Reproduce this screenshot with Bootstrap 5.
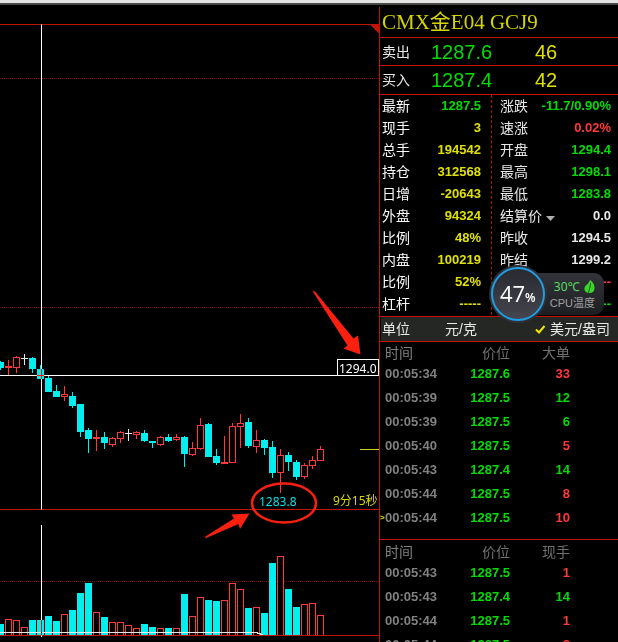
<!DOCTYPE html>
<html lang="zh-CN">
<head>
<meta charset="utf-8">
<meta name="viewport" content="width=device-width, initial-scale=1">
<title>CMX金E04 GCJ9</title>
<link href="https://cdn.jsdelivr.net/npm/bootstrap@5.3.0/dist/css/bootstrap.min.css" rel="stylesheet">
<style>
  :root {
    --up: #ff3838;
    --down: #00dc00;
    --gold: #e0e000;
    --line: #c01408;
  }
  body {
    background: #000;
    color: #e8e8e8;
    font: 14px/22px "Liberation Sans", "Noto Sans CJK SC", sans-serif;
  }
  .titlebar { height: 5px; background: #e4e4e4; border-bottom: 2px solid #484848; }
  .chart-pane { min-width: 0; }
  .chart-pane svg { height: auto; }
  .quote-pane { flex: 0 0 239px; border-left: 1px solid var(--line); margin-top: 2px; }
  .rule { border-bottom: 1px solid var(--line); }
  .c-up { color: var(--up); }
  .c-down { color: var(--down); }
  .c-gold { color: var(--gold); }

  .symbol { font: 21px/30px "Liberation Serif", "Noto Sans CJK SC", serif; color: #d4d400; padding-left: 2px; }
  .level { height: 28px; padding-left: 2px; }
  .level + .level { height: 29px; }
  .level .side { width: 49px; }
  .level .price, .level .lots { font-size: 20px; }
  .level .price { width: 104px; }

  .stats { grid-template-columns: 111fr 127fr; padding-bottom: 1px; }
  .stats dl + dl { border-left: 1px dashed #b01818; }
  .stats dl > div { height: 22px; padding: 0 10px 0 2px; }
  .stats dl + dl > div { padding: 0 7px 0 8px; }
  .stats dt { font-weight: 400; }
  .stats dd { font: 700 13px/22px "Liberation Sans", sans-serif; }
  .pick { background: none; color: inherit; line-height: 22px; }

  .units { height: 24px; background: #242723; margin-left: 1px; padding: 0 8px 0 1px; }
  .units .metric { margin-left: 35px; }

  .ticks { table-layout: fixed; font: 700 13px/24px "Liberation Sans", sans-serif; }
  .ticks th { height: 20px; font: 400 14px/20px "Noto Sans CJK SC", sans-serif; color: #707070; padding: 0; }
  .ticks td { height: 24px; padding: 0; }
  .ticks .t { width: 70px; padding-left: 5px; color: #808080; }
  .ticks .n { width: 60px; text-align: right; }
  .big-orders { padding-bottom: 9px; margin-bottom: 1px; }
  .cursor { left: 0; color: var(--gold); font-size: 8px; }

  .gadget { top: 170px; right: 14px; font-family: "Noto Sans", "Noto Sans CJK SC", sans-serif; }
  .dial { width: 58px; height: 58px; background: rgba(48, 49, 56, .95); z-index: 1; }
  .dial-face { width: 54px; height: 54px; border: 2px solid #1f9ee8; background: linear-gradient(#292a30, #44454e); color: #fff; }
  .dial-face b { font: 400 22px/48px "Open Sans", sans-serif; }
  .dial-face small { font-size: 12px; font-weight: 600; }
  .temp { background: linear-gradient(#33343a, #1d1e22); border-radius: 10px; margin-left: -29px; padding: 5px 9px 3px 32px; font-size: 12px; line-height: 17px; color: #a0a0a0; }
  .temp .name { font-family: "Liberation Sans", "Noto Sans CJK SC", sans-serif; font-size: 11px; }
  .temp .deg { color: #58dc60; }
</style>
<script src="https://cdn.jsdelivr.net/npm/bootstrap@5.3.0/dist/js/bootstrap.bundle.min.js"></script>
</head>
<body class="vh-100 overflow-hidden">
<div class="titlebar"></div>
<main class="d-flex">
  <section class="chart-pane flex-grow-1" aria-label="K线图">
    <svg class="d-block w-100" viewBox="0 5 379 637" shape-rendering="crispEdges" font-family="Noto Sans, Noto Sans CJK SC, sans-serif">
      <rect y="5" width="379" height="637" fill="#000"/>
      <g fill="#c01408">
        <rect y="24" width="379" height="1"/>
        <path d="M369 24h10v10z"/>
        <rect y="509" width="379" height="1"/>
      </g>
      <path d="M0 78.500H379M0 307.500H379M0 581.500H379" stroke="#800c0c" stroke-dasharray="1 1"/>
      <g id="candles"></g>
      <g id="volumes"></g>
      <rect y="635" width="379" height="1" fill="#c01408"/>
      <path d="M0 632h258v1h3v1h2v1h-3v-1h-3v-1H0z" fill="#e8e8e8"/>
      <path d="M41 24h1v486h-1zM41 525h1v112h-1zM0 375h337v1H0z" fill="#fff" style="mix-blend-mode:difference"/>
      <rect x="360" y="449" width="19" height="1" fill="#d0d020"/>
      <rect x="337.500" y="359.500" width="41" height="16" fill="#000" stroke="#fff"/>
      <text x="339" y="373" font-size="12" fill="#fff">1294.0</text>
      <text x="259" y="506" font-size="12" fill="#00e0e8">1283.8</text>
      <text x="333" y="505" font-size="12" fill="#d8d800">9分15秒</text>
      <g fill="#fa2010" shape-rendering="geometricPrecision">
        <ellipse cx="284" cy="503" rx="32" ry="19.500" fill="none" stroke="#fa2010" stroke-width="2.500"/>
        <path d="M312.500 291l2.500 0.500 38.500 47 4.500-3 2.500 19-17-6 4-3z"/>
        <path d="M205 538.500l0.500-2 28.500-18-2.500-4 18-1-9.500 15.500-1.500-5z"/>
      </g>
    </svg>
  </section>

  <aside class="quote-pane">
    <h1 class="symbol rule m-0">CMX金E04 GCJ9</h1>
    <div class="level rule d-flex align-items-center"><span class="side">卖出</span><span class="price c-down">1287.6</span><span class="lots c-gold">46</span></div>
    <div class="level rule d-flex align-items-center"><span class="side">买入</span><span class="price c-down">1287.4</span><span class="lots c-gold">42</span></div>

    <div class="stats rule d-grid position-relative">
      <dl class="m-0 c-gold">
        <div class="d-flex justify-content-between"><dt class="text-light">最新</dt><dd class="m-0 c-down">1287.5</dd></div>
        <div class="d-flex justify-content-between"><dt class="text-light">现手</dt><dd class="m-0">3</dd></div>
        <div class="d-flex justify-content-between"><dt class="text-light">总手</dt><dd class="m-0">194542</dd></div>
        <div class="d-flex justify-content-between"><dt class="text-light">持仓</dt><dd class="m-0">312568</dd></div>
        <div class="d-flex justify-content-between"><dt class="text-light">日增</dt><dd class="m-0">-20643</dd></div>
        <div class="d-flex justify-content-between"><dt class="text-light">外盘</dt><dd class="m-0">94324</dd></div>
        <div class="d-flex justify-content-between"><dt class="text-light">比例</dt><dd class="m-0">48%</dd></div>
        <div class="d-flex justify-content-between"><dt class="text-light">内盘</dt><dd class="m-0">100219</dd></div>
        <div class="d-flex justify-content-between"><dt class="text-light">比例</dt><dd class="m-0">52%</dd></div>
        <div class="d-flex justify-content-between"><dt class="text-light">杠杆</dt><dd class="m-0">-----</dd></div>
      </dl>
      <dl class="m-0">
        <div class="d-flex justify-content-between"><dt>涨跌</dt><dd class="m-0 c-down">-11.7/0.90%</dd></div>
        <div class="d-flex justify-content-between"><dt>速涨</dt><dd class="m-0 c-up">0.02%</dd></div>
        <div class="d-flex justify-content-between"><dt>开盘</dt><dd class="m-0 c-down">1294.4</dd></div>
        <div class="d-flex justify-content-between"><dt>最高</dt><dd class="m-0 c-down">1298.1</dd></div>
        <div class="d-flex justify-content-between"><dt>最低</dt><dd class="m-0 c-down">1283.8</dd></div>
        <div class="d-flex justify-content-between"><dt><button type="button" class="pick border-0 p-0 d-flex align-items-center">结算价<svg class="ms-1 mt-1" width="9" height="5" aria-hidden="true"><path d="M0 0h9L4.500 5z" fill="#b0b0b0"/></svg></button></dt><dd class="m-0">0.0</dd></div>
        <div class="d-flex justify-content-between"><dt>昨收</dt><dd class="m-0">1294.5</dd></div>
        <div class="d-flex justify-content-between"><dt>昨结</dt><dd class="m-0">1299.2</dd></div>
        <div class="d-flex justify-content-between"><dt>涨停</dt><dd class="m-0 c-up">-----</dd></div>
        <div class="d-flex justify-content-between"><dt>跌停</dt><dd class="m-0 c-down">-----</dd></div>
      </dl>
      <div class="gadget position-absolute d-flex align-items-center">
        <div class="dial rounded-circle d-flex align-items-center justify-content-center position-relative">
          <div class="dial-face rounded-circle d-flex align-items-baseline justify-content-center"><b>47</b><small>%</small></div>
        </div>
        <div class="temp">
          <div class="deg d-flex align-items-center justify-content-between ps-1">30℃
            <svg width="11" height="14" viewBox="0 0 11 14" aria-hidden="true"><path d="M6 0C9 2 11 5 10.500 9 10 12 7.500 13.500 5 13 2 13 0 10.500 0.500 8 1 5 5 4 6 0z" fill="#3cd428"/><path d="M6.500 3C6.500 7 5 10 4 14" fill="none" stroke="#1d5c1c"/></svg>
          </div>
          <div class="name">CPU温度</div>
        </div>
      </div>
    </div>

    <div class="units d-flex align-items-center">
      <span>单位</span><span class="metric">元/克</span>
      <span class="ms-auto d-flex align-items-center gap-1"><svg width="11" height="9" aria-hidden="true"><path d="M1 4.500l3 3L9.500 1" fill="none" stroke="#f0e800" stroke-width="2"/></svg>美元/盎司</span>
    </div>
    <div class="rule"></div>

    <div class="big-orders rule">
      <table class="ticks w-100">
        <thead><tr><th class="t">时间</th><th class="n">价位</th><th class="n">大单</th><th></th></tr></thead>
        <tbody>
          <tr><td class="t">00:05:34</td><td class="n c-down">1287.6</td><td class="n c-up">33</td><td></td></tr>
          <tr><td class="t">00:05:39</td><td class="n c-down">1287.5</td><td class="n c-down">12</td><td></td></tr>
          <tr><td class="t">00:05:39</td><td class="n c-down">1287.5</td><td class="n c-down">6</td><td></td></tr>
          <tr><td class="t">00:05:40</td><td class="n c-down">1287.5</td><td class="n c-up">5</td><td></td></tr>
          <tr><td class="t">00:05:43</td><td class="n c-down">1287.4</td><td class="n c-down">14</td><td></td></tr>
          <tr><td class="t">00:05:44</td><td class="n c-down">1287.5</td><td class="n c-up">8</td><td></td></tr>
          <tr><td class="t position-relative"><span class="cursor position-absolute">&gt;</span>00:05:44</td><td class="n c-down">1287.5</td><td class="n c-up">10</td><td></td></tr>
        </tbody>
      </table>
    </div>
    <table class="ticks w-100">
      <thead><tr><th class="t">时间</th><th class="n">价位</th><th class="n">现手</th><th></th></tr></thead>
      <tbody>
        <tr><td class="t">00:05:43</td><td class="n c-down">1287.5</td><td class="n c-up">1</td><td></td></tr>
        <tr><td class="t">00:05:43</td><td class="n c-down">1287.4</td><td class="n c-down">14</td><td></td></tr>
        <tr><td class="t">00:05:44</td><td class="n c-down">1287.5</td><td class="n c-up">1</td><td></td></tr>
        <tr><td class="t">00:05:44</td><td class="n c-down">1287.5</td><td class="n c-up">8</td><td></td></tr>
      </tbody>
    </table>
  </aside>
</main>
<script>
  // One entry per bar: kind (c falling, r rising, f flat, w unchanged), wick top, body top, body bottom, wick bottom, volume top
  const bars = [
    ['c',361,362,368,370,624],['f',360,366,368,375,619],['r',356,357,368,373,620],['w',354,358,359,365,627],
    ['c',357,358,369,373,620],['c',365,369,379,379,620],['c',376,378,392,392,616],['c',385,391,397,397,621],
    ['r',386,394,397,401,614],['c',392,396,406,408,610],['c',404,404,432,437,593],['c',428,430,439,453,583],
    ['f',430,437,439,451,612],['c',432,437,443,449,617],['r',437,438,445,447,622],['r',431,432,439,443,622],
    ['w',429,433,434,441,625],['r',431,432,435,439,628],['c',430,433,441,442,624],['c',441,441,443,448,627],
    ['r',436,437,445,446,628],['c',434,437,441,442,628],['r',434,437,440,441,628],['c',436,437,454,467,594],
    ['r',442,448,455,456,616],['r',418,425,449,450,597],['c',423,424,457,457,600],['c',449,456,463,465,601],
    ['f',436,462,464,464,600],['r',423,426,463,463,583],['r',414,423,427,448,589],['c',418,422,446,448,608],
    ['r',430,440,447,453,607],['c',439,440,448,455,613],['c',441,447,473,478,563],['r',449,455,473,493,556],
    ['c',452,455,462,471,589],['c',460,462,477,480,607],['r',463,465,477,479,604],['r',456,460,466,469,603],
    ['r',446,449,461,461,615]
  ];
  const ink = { c: '#00f0f0', r: '#ff3838', f: '#ff3838', w: '#e8e8e8' };
  const rect = (x, y, w, h, fill) => `<rect x="${x}" y="${y}" width="${w}" height="${h}" fill="${fill}"/>`;
  const body = (x, y, h, hollow, color) =>
    rect(x, y, 7, h, color) + (hollow ? rect(x + 1, y + 1, 5, h - 2, '#000') : '');
  let candles = '', volumes = '';
  bars.forEach(([kind, high, top, bottom, low, vol], i) => {
    const x = i * 8, color = ink[kind];
    candles += rect(x, high, 1, low - high, color) + body(x - 3, top, bottom - top, kind === 'r', color);
    // Volume bars run one pixel past the baseline so that hollow ones stay open at the foot
    volumes += body(x - 3, vol, 636 - vol, kind !== 'c', kind === 'c' ? ink.c : ink.r);
  });
  document.getElementById('candles').innerHTML = candles;
  document.getElementById('volumes').innerHTML = volumes;
</script>
</body>
</html>
